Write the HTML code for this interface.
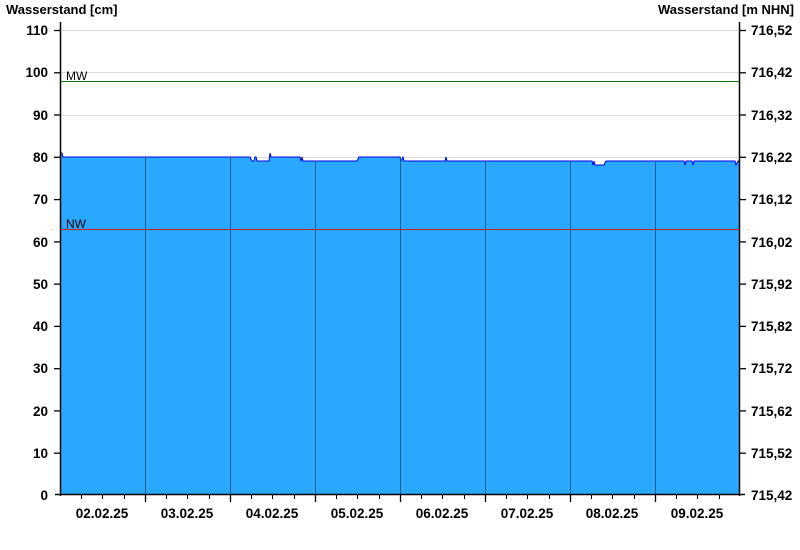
<!DOCTYPE html>
<html><head><meta charset="utf-8"><style>
html,body{margin:0;padding:0;background:#fff;}
svg{display:block;font-family:"Liberation Sans",Arial,sans-serif;font-weight:bold;}
</style></head><body>
<svg width="800" height="550" viewBox="0 0 800 550" xmlns="http://www.w3.org/2000/svg">
<text x="6" y="14" font-size="13">Wasserstand [cm]</text>
<text x="794" y="14" font-size="13" text-anchor="end">Wasserstand [m NHN]</text>
<g stroke="#dcdcdc" stroke-width="1">
<line x1="60" x2="740" y1="30.5" y2="30.5"/><line x1="60" x2="740" y1="72.5" y2="72.5"/><line x1="60" x2="740" y1="115.5" y2="115.5"/><line x1="60" x2="740" y1="157.5" y2="157.5"/>
</g>
<path d="M60,495 L60,153 L62,153 L63,157 L250,157 L252,161 L254,161 L255,157 L256,157 L257,161 L269,161 L270,153 L271,157 L300,157 L301,161 L302,157 L303,161 L357,161 L359,157 L400,157 L401,161 L403,157 L404,161 L445,161 L446,157 L447,161 L592,161 L593,165 L594,161 L595,165 L604,165 L606,161 L684,161 L685,165 L686,161 L692,161 L693,165 L694,161 L735,161 L736,165 L738,161 L740,161 L740,495 Z" fill="#2aa8ff" stroke="none"/>
<path d="M60,153 L62,153 L63,157 L250,157 L252,161 L254,161 L255,157 L256,157 L257,161 L269,161 L270,153 L271,157 L300,157 L301,161 L302,157 L303,161 L357,161 L359,157 L400,157 L401,161 L403,157 L404,161 L445,161 L446,157 L447,161 L592,161 L593,165 L594,161 L595,165 L604,165 L606,161 L684,161 L685,165 L686,161 L692,161 L693,165 L694,161 L735,161 L736,165 L738,161 L740,161" fill="none" stroke="#0000e0" stroke-width="1"/>
<g stroke="#1d5f8a" stroke-width="1">
<line x1="145.5" x2="145.5" y1="157" y2="495"/><line x1="230.5" x2="230.5" y1="157" y2="495"/><line x1="315.5" x2="315.5" y1="161" y2="495"/><line x1="400.5" x2="400.5" y1="157" y2="495"/><line x1="485.5" x2="485.5" y1="161" y2="495"/><line x1="570.5" x2="570.5" y1="161" y2="495"/><line x1="655.5" x2="655.5" y1="161" y2="495"/>
</g>
<line x1="60" x2="740" y1="81.5" y2="81.5" stroke="#1a6e1a"/>
<line x1="60" x2="740" y1="229.5" y2="229.5" stroke="#cc1f1f"/>
<text x="66" y="80" font-size="12" font-weight="normal">MW</text>
<text x="66" y="228" font-size="12" font-weight="normal">NW</text>
<g stroke="#000" stroke-width="1.5" fill="none">
<line x1="60.5" x2="60.5" y1="22" y2="496"/><line x1="739.5" x2="739.5" y1="22" y2="496"/><line x1="55" x2="745" y1="494.5" y2="494.5"/>
</g>
<g stroke="#000" stroke-width="1.3">
<line x1="54" x2="60" y1="30.5" y2="30.5"/><line x1="54" x2="60" y1="72.8" y2="72.8"/><line x1="54" x2="60" y1="115" y2="115"/><line x1="54" x2="60" y1="157.3" y2="157.3"/><line x1="54" x2="60" y1="199.6" y2="199.6"/><line x1="54" x2="60" y1="241.9" y2="241.9"/><line x1="54" x2="60" y1="284.1" y2="284.1"/><line x1="54" x2="60" y1="326.4" y2="326.4"/><line x1="54" x2="60" y1="368.7" y2="368.7"/><line x1="54" x2="60" y1="410.9" y2="410.9"/><line x1="54" x2="60" y1="453.2" y2="453.2"/>
<line x1="740" x2="746" y1="30.5" y2="30.5"/><line x1="740" x2="746" y1="72.8" y2="72.8"/><line x1="740" x2="746" y1="115" y2="115"/><line x1="740" x2="746" y1="157.3" y2="157.3"/><line x1="740" x2="746" y1="199.6" y2="199.6"/><line x1="740" x2="746" y1="241.9" y2="241.9"/><line x1="740" x2="746" y1="284.1" y2="284.1"/><line x1="740" x2="746" y1="326.4" y2="326.4"/><line x1="740" x2="746" y1="368.7" y2="368.7"/><line x1="740" x2="746" y1="410.9" y2="410.9"/><line x1="740" x2="746" y1="453.2" y2="453.2"/>
<line x1="145.5" x2="145.5" y1="495" y2="502"/><line x1="230.5" x2="230.5" y1="495" y2="502"/><line x1="315.5" x2="315.5" y1="495" y2="502"/><line x1="400.5" x2="400.5" y1="495" y2="502"/><line x1="485.5" x2="485.5" y1="495" y2="502"/><line x1="570.5" x2="570.5" y1="495" y2="502"/><line x1="655.5" x2="655.5" y1="495" y2="502"/>
</g>
<g stroke="#000" stroke-width="1">
<line x1="81.5" x2="81.5" y1="495" y2="499"/><line x1="102.5" x2="102.5" y1="495" y2="499"/><line x1="124.5" x2="124.5" y1="495" y2="499"/>
<line x1="166.5" x2="166.5" y1="495" y2="499"/><line x1="187.5" x2="187.5" y1="495" y2="499"/><line x1="209.5" x2="209.5" y1="495" y2="499"/>
<line x1="251.5" x2="251.5" y1="495" y2="499"/><line x1="272.5" x2="272.5" y1="495" y2="499"/><line x1="294.5" x2="294.5" y1="495" y2="499"/>
<line x1="336.5" x2="336.5" y1="495" y2="499"/><line x1="357.5" x2="357.5" y1="495" y2="499"/><line x1="379.5" x2="379.5" y1="495" y2="499"/>
<line x1="421.5" x2="421.5" y1="495" y2="499"/><line x1="442.5" x2="442.5" y1="495" y2="499"/><line x1="464.5" x2="464.5" y1="495" y2="499"/>
<line x1="506.5" x2="506.5" y1="495" y2="499"/><line x1="527.5" x2="527.5" y1="495" y2="499"/><line x1="549.5" x2="549.5" y1="495" y2="499"/>
<line x1="591.5" x2="591.5" y1="495" y2="499"/><line x1="612.5" x2="612.5" y1="495" y2="499"/><line x1="634.5" x2="634.5" y1="495" y2="499"/>
<line x1="676.5" x2="676.5" y1="495" y2="499"/><line x1="697.5" x2="697.5" y1="495" y2="499"/><line x1="719.5" x2="719.5" y1="495" y2="499"/>
</g>
<g font-size="13.5" text-anchor="end">
<text x="48" y="35">110</text><text x="48" y="77">100</text><text x="48" y="120">90</text><text x="48" y="162">80</text><text x="48" y="204">70</text><text x="48" y="247">60</text><text x="48" y="289">50</text><text x="48" y="331">40</text><text x="48" y="373">30</text><text x="48" y="416">20</text><text x="48" y="458">10</text><text x="48" y="500">0</text>
</g>
<g font-size="13.5">
<text x="751" y="35">716,52</text><text x="751" y="77">716,42</text><text x="751" y="120">716,32</text><text x="751" y="162">716,22</text><text x="751" y="204">716,12</text><text x="751" y="247">716,02</text><text x="751" y="289">715,92</text><text x="751" y="331">715,82</text><text x="751" y="373">715,72</text><text x="751" y="416">715,62</text><text x="751" y="458">715,52</text><text x="751" y="500">715,42</text>
</g>
<g font-size="13.5" text-anchor="middle">
<text x="102" y="518">02.02.25</text><text x="187" y="518">03.02.25</text><text x="272" y="518">04.02.25</text><text x="357" y="518">05.02.25</text><text x="442" y="518">06.02.25</text><text x="527" y="518">07.02.25</text><text x="612" y="518">08.02.25</text><text x="697" y="518">09.02.25</text>
</g>
</svg>
</body></html>
